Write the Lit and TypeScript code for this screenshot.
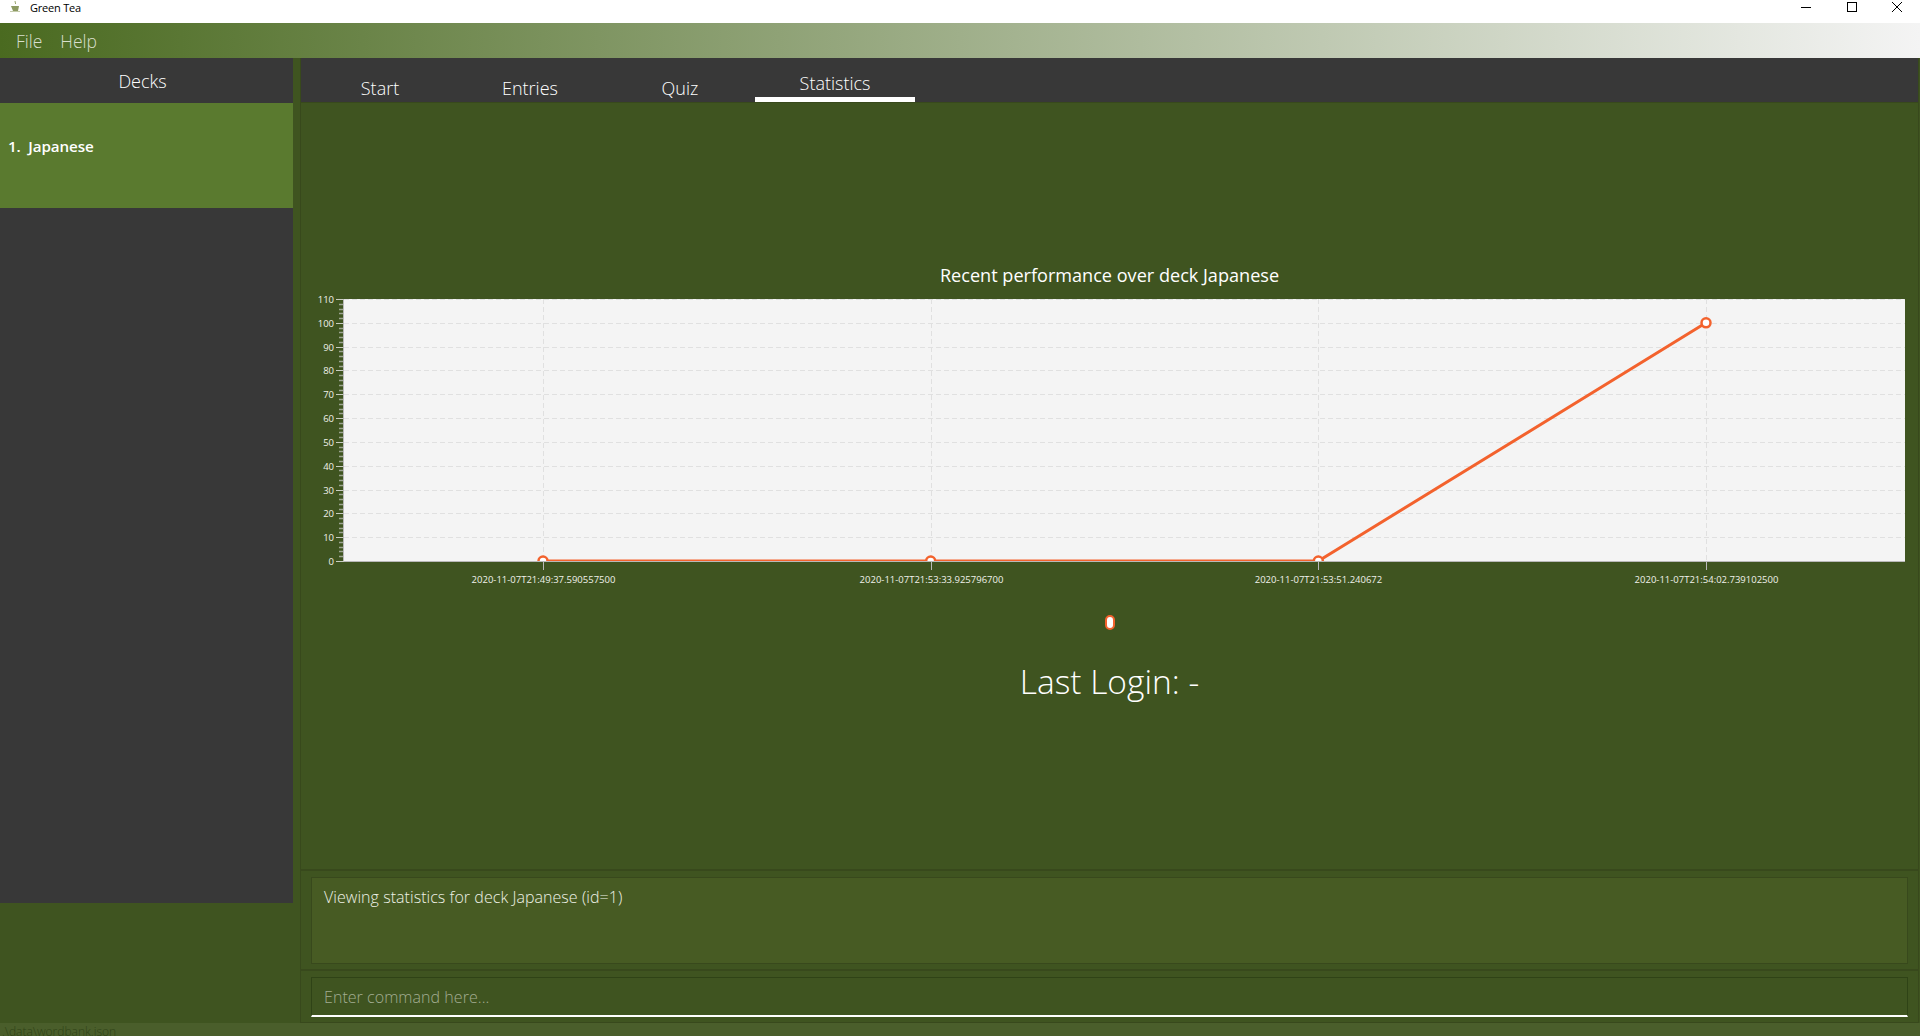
import { LitElement, html, css, svg } from 'lit';
import { customElement, state } from 'lit/decorators.js';

// plot geometry in page-ish pixels, svg starts at x=301
const LEFT = 43;
const RIGHT = 1604;
const TOP = 8;
const BOTTOM = 270;
const MAX = 110;

const points = [
  { label: '2020-11-07T21:49:37.590557500', value: 0 },
  { label: '2020-11-07T21:53:33.925796700', value: 0 },
  { label: '2020-11-07T21:53:51.240672', value: 0 },
  { label: '2020-11-07T21:54:02.739102500', value: 100 },
];

const xAt = (i: number) => 242 + i * 387.67;
const yAt = (v: number) => BOTTOM - (v / MAX) * (BOTTOM - TOP);

@customElement('perf-chart')
export class PerfChart extends LitElement {
  static styles = css`
    :host {
      display: block;
    }
    svg {
      display: block;
    }
    .plot {
      fill: #f4f4f4;
    }
    .grid {
      stroke: #e0e0e0;
      stroke-width: 1;
      stroke-dasharray: 5 3;
    }
    .axis {
      stroke: #b9b9b9;
      stroke-width: 1;
    }
    .major {
      stroke: #c8ccc0;
      stroke-width: 1;
    }
    .minor {
      stroke: #9ea592;
      stroke-width: 1.5;
    }
    .label {
      fill: #f0f1ea;
      font-family: 'Open Sans', sans-serif;
      font-size: 9.5px;
      font-weight: 400;
    }
    .series {
      fill: none;
      stroke: #f3622d;
      stroke-width: 3;
    }
    .dot {
      fill: #fff;
      stroke: #f3622d;
      stroke-width: 2.5;
    }
  `;

  render() {
    const majors = Array.from({ length: 12 }, (_, i) => i * 10);
    const minors = Array.from({ length: 56 }, (_, i) => i * 2).filter((v) => v % 10 !== 0);
    const line = points.map((p, i) => `${xAt(i)},${yAt(p.value)}`).join(' ');
    return html`
      <svg width="1618" height="305" viewBox="0 0 1618 305">
        <defs>
          <clipPath id="plot-clip">
            <rect x=${LEFT} y=${TOP} width=${RIGHT - LEFT} height=${BOTTOM - TOP}></rect>
          </clipPath>
        </defs>
        <rect class="plot" x=${LEFT} y=${TOP} width=${RIGHT - LEFT} height=${BOTTOM - TOP}></rect>
        ${majors.map((v) => {
          const y = Math.round(yAt(v)) + 0.5;
          return svg`
            <line class="grid" x1=${LEFT} x2=${RIGHT} y1=${y} y2=${y}></line>
            <line class="major" x1=${LEFT - 8} x2=${LEFT} y1=${y} y2=${y}></line>
            <text class="label" x=${LEFT - 10} y=${y + 3.5} text-anchor="end">${v}</text>
          `;
        })}
        ${minors.map((v) => {
          const y = Math.round(yAt(v)) + 0.5;
          return svg`<line class="minor" x1=${LEFT - 5} x2=${LEFT} y1=${y} y2=${y}></line>`;
        })}
        ${points.map((p, i) => {
          const x = Math.round(xAt(i)) + 0.5;
          return svg`
            <line class="grid" x1=${x} x2=${x} y1=${TOP} y2=${BOTTOM}></line>
            <line class="axis" x1=${x} x2=${x} y1=${BOTTOM} y2=${BOTTOM + 9}></line>
            <text class="label" x=${x} y=${BOTTOM + 22} text-anchor="middle">${p.label}</text>
          `;
        })}
        <line class="axis" x1=${LEFT - 0.5} x2=${LEFT - 0.5} y1=${TOP} y2=${BOTTOM}></line>
        <line class="axis" x1=${LEFT} x2=${RIGHT} y1=${BOTTOM + 0.5} y2=${BOTTOM + 0.5}></line>
        <g clip-path="url(#plot-clip)">
          <polyline class="series" points=${line}></polyline>
          ${points.map(
            (p, i) => svg`<circle class="dot" cx=${xAt(i)} cy=${yAt(p.value)} r="4.5"></circle>`
          )}
        </g>
      </svg>
    `;
  }
}

@customElement('app-root')
export class AppRoot extends LitElement {
  @state() tabs = ['Start', 'Entries', 'Quiz', 'Statistics'];
  @state() active = 'Statistics';

  static styles = css`
    :host {
      display: flex;
      flex-direction: column;
      width: 1920px;
      height: 1036px;
      overflow: hidden;
      background: #3f5420;
      font-family: 'Open Sans', sans-serif;
      font-weight: 300;
      color: #fff;
    }
    .titlebar {
      flex: none;
      height: 23px;
      background: #fff;
      color: #000;
      display: flex;
      align-items: center;
      font-size: 11px;
      font-weight: 400;
      padding-left: 10px;
      padding-bottom: 9px;
      box-sizing: border-box;
      gap: 9px;
    }
    .title {
      flex: 1;
      letter-spacing: -0.2px;
    }
    .win {
      display: flex;
      gap: 35.5px;
      padding-right: 18px;
    }
    .win svg {
      display: block;
    }
    .menubar {
      flex: none;
      height: 35px;
      display: flex;
      align-items: center;
      gap: 18px;
      padding-left: 16px;
      background: linear-gradient(to right, #4a6a20, #f4f4f4);
      color: #d9dfce;
      font-size: 17.5px;
    }
    .body {
      flex: 1;
      display: flex;
      min-height: 0;
    }
    .side {
      flex: none;
      width: 293px;
      height: 845px;
      background: #383838;
      margin-right: 7px;
    }
    .side-head {
      height: 45px;
      display: flex;
      align-items: center;
      justify-content: center;
      font-size: 18px;
      padding-top: 1px;
      padding-right: 8px;
      box-sizing: border-box;
    }
    .deck {
      height: 105px;
      background: #5a7a2f;
      padding: 33px 8px 0;
      box-sizing: border-box;
      font-size: 15.2px;
      font-weight: 600;
      white-space: pre;
      letter-spacing: -0.1px;
    }
    .main {
      flex: 1;
      display: flex;
      flex-direction: column;
      min-width: 0;
      border-left: 1px solid #38491c;
      margin-right: 1px;
      border-right: 1px solid #38491c;
      border-bottom: 1px solid #38491c;
    }
    .tabs {
      flex: none;
      height: 45px;
      background: #383838;
      display: flex;
      padding-left: 4px;
      box-sizing: border-box;
      border-bottom: 1px solid #38491c;
    }
    .tab {
      width: 150px;
      height: 44px;
      display: flex;
      align-items: flex-end;
      justify-content: center;
      padding-bottom: 2px;
      box-sizing: border-box;
      font-size: 18px;
      line-height: 24px;
    }
    .tab.on {
      width: 160px;
      padding-bottom: 2px;
      border-bottom: 5px solid #fff;
    }
    .stats {
      flex: 1;
      min-height: 0;
      display: flex;
      flex-direction: column;
      align-items: center;
      padding-top: 159px;
      border-bottom: 2px solid #38491c;
    }
    .chart-title {
      font-size: 18.1px;
      font-weight: 400;
      line-height: 26px;
    }
    .stats perf-chart {
      align-self: flex-start;
      margin-top: 3px;
    }
    .legend {
      width: 10px;
      height: 15px;
      box-sizing: border-box;
      background: #fff;
      border: 2px solid #f3622d;
      border-radius: 5px;
      margin-top: 19px;
    }
    .login {
      font-size: 33.5px;
      line-height: 42px;
      margin-top: 30px;
    }
    .result-wrap {
      flex: none;
      height: 100px;
      padding: 6px 10px 5px;
      box-sizing: border-box;
      border-bottom: 2px solid #38491c;
    }
    .result {
      height: 100%;
      box-sizing: border-box;
      background: #475b23;
      border: 1px solid #38491c;
      padding: 7px 12px;
      font-size: 16px;
      line-height: 24px;
      color: #eef1e6;
      letter-spacing: 0.05px;
    }
    .cmd-wrap {
      flex: none;
      padding: 6px 10px 5px;
    }
    .cmd {
      display: block;
      width: 100%;
      height: 40px;
      box-sizing: border-box;
      background: #3f5420;
      border: 1px solid #2f4316;
      border-bottom: 2px solid #fff;
      padding: 0 12px;
      outline: none;
      color: #fff;
      font: inherit;
      font-size: 16px;
      letter-spacing: 0.05px;
    }
    .cmd::placeholder {
      color: #a3ad92;
      opacity: 1;
    }
    .status {
      flex: none;
      height: 13px;
      overflow: hidden;
      background: #4a5e2b;
      color: #2f4316;
      font-size: 12px;
      line-height: 13px;
      padding: 2px 0 0 2px;
      box-sizing: border-box;
    }
  `;

  render() {
    return html`
      <div class="titlebar">
        <svg width="11" height="12" viewBox="0 0 11 12">
          <path d="M5 0 L5.6 3" stroke="#9aa56e" stroke-width="1" fill="none"></path>
          <path d="M1 5 H9 L8 10 H3 Z" fill="#8d9a63"></path>
          <path d="M0 10.5 H10" stroke="#c4cbab" stroke-width="1"></path>
        </svg>
        <span class="title">Green Tea</span>
        <div class="win">
          <svg width="10" height="10" viewBox="0 0 10 10"><path d="M0 5.5 H10" stroke="#000"></path></svg>
          <svg width="10" height="10" viewBox="0 0 10 10"><rect x=".5" y=".5" width="9" height="9" fill="none" stroke="#000"></rect></svg>
          <svg width="10" height="10" viewBox="0 0 10 10"><path d="M0 0 L10 10 M10 0 L0 10" stroke="#000"></path></svg>
        </div>
      </div>
      <div class="menubar"><span>File</span><span>Help</span></div>
      <div class="body">
        <aside class="side">
          <div class="side-head">Decks</div>
          <div class="deck">1.  Japanese</div>
        </aside>
        <main class="main">
          <nav class="tabs">
            ${this.tabs.map(
              (t) => html`<div class="tab ${t === this.active ? 'on' : ''}">${t}</div>`
            )}
          </nav>
          <section class="stats">
            <div class="chart-title">Recent performance over deck Japanese</div>
            <perf-chart></perf-chart>
            <div class="legend"></div>
            <div class="login">Last Login: -</div>
          </section>
          <div class="result-wrap">
            <div class="result">Viewing statistics for deck Japanese (id=1)</div>
          </div>
          <div class="cmd-wrap">
            <input class="cmd" placeholder="Enter command here..." />
          </div>
        </main>
      </div>
      <div class="status">.\\data\\wordbank.json</div>
    `;
  }
}
